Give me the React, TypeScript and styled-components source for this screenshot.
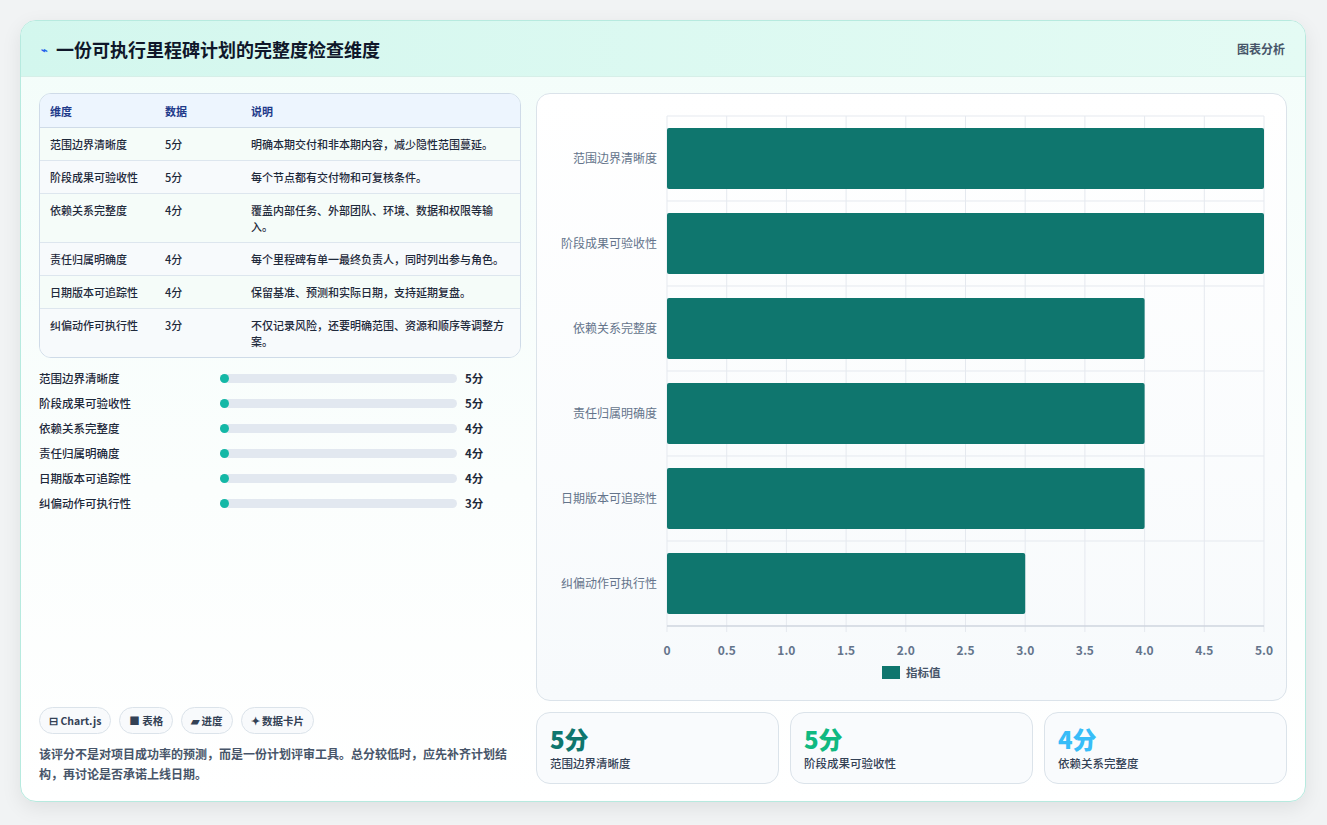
import React from "react";
import styled, { createGlobalStyle } from "styled-components";

const G = createGlobalStyle`
  html,body{margin:0;padding:0;background:#f1f3f4;}
  body{font-family:"Noto Sans CJK SC","Noto Sans",sans-serif;}
`;
const Page = styled.div`padding:20px 21px 23px 20px;`;
const Card = styled.div`
  width:1286px;height:782px;box-sizing:border-box;border:1px solid #b7eadf;border-radius:16px;
  background:linear-gradient(180deg,#f3fdfa 0%,#fbfefd 60%,#ffffff 100%);overflow:hidden;
  box-shadow:0 6px 20px rgba(0,0,0,0.08);display:flex;flex-direction:column;
`;
const Header = styled.div`
  height:55px;display:flex;align-items:center;justify-content:space-between;padding:0 20px 0 20px;
  background:linear-gradient(90deg,#d3f7ee,#e4fbf4);border-bottom:1px solid #d6efe8;
`;
const Title = styled.h1`margin:0;font-size:18px;font-weight:700;color:#0f172a;display:flex;align-items:center;gap:8px;`;
const HLink = styled.span`font-size:12px;color:#475569;font-weight:600;`;
const Body = styled.div`flex:1;display:grid;grid-template-columns:482px 751px;gap:15px;padding:16px 18px 17px 18px;`;
const Left = styled.div`display:flex;flex-direction:column;`;
const Table = styled.table`
  width:100%;border-collapse:separate;border-spacing:0;border:1px solid #cfdbe8;border-radius:12px;overflow:hidden;font-size:11px;color:#1e293b;
  th{background:#edf5fe;color:#1e3a8a;font-weight:600;text-align:left;padding:9px 10px 8px;border-bottom:1px solid #cfdbe8;}
  td{padding:8px 10px;border-bottom:1px solid #dde6ee;vertical-align:top;line-height:16px;font-weight:500;}
  tr:nth-child(odd) td{background:#f5fcf9;}
  tr:nth-child(even) td{background:#f7fafc;}
  tr:last-child td{border-bottom:none;}
`;
const Bars = styled.div`display:flex;flex-direction:column;gap:7px;margin-top:11px;`;
const BarRow = styled.div`display:grid;grid-template-columns:173px 237px 30px;align-items:center;gap:8px;font-size:11.5px;color:#1e293b;font-weight:500;height:18px;`;
const Track = styled.div`height:9px;border-radius:5px;background:#e2e8f0;position:relative;`;
const Dot = styled.div`width:9px;height:9px;border-radius:50%;background:#14b8a6;`;
const Val = styled.span`font-weight:700;font-size:11.5px;`;
const Spacer = styled.div`flex:1;`;
const Chips = styled.div`display:flex;gap:8px;margin-bottom:10px;`;
const Chip = styled.span`font-size:10.5px;font-weight:700;color:#334155;border:1px solid #dbe3ea;border-radius:14px;padding:5px 9px;background:#f8fafc;`;
const Note = styled.p`margin:0;font-size:12px;line-height:20px;color:#475569;font-weight:600;`;
const Right = styled.div`display:flex;flex-direction:column;gap:11px;`;
const ChartBox = styled.div`height:606px;border:1px solid #dbe3ea;border-radius:14px;background:linear-gradient(180deg,#fff,#f7fafc);`;
const Stats = styled.div`display:grid;grid-template-columns:repeat(3,1fr);gap:11px;`;
const Stat = styled.div`height:72px;box-sizing:border-box;border:1px solid #dbe3ea;border-radius:14px;background:#f9fbfd;padding:10px 13px;`;
const Num = styled.div<{c:string}>`font-size:24px;font-weight:800;color:${p=>p.c};line-height:32px;`;
const Lab = styled.div`font-size:11.5px;color:#334155;font-weight:500;`;

const rows = [
  ["范围边界清晰度", 5, "明确本期交付和非本期内容，减少隐性范围蔓延。"],
  ["阶段成果可验收性", 5, "每个节点都有交付物和可复核条件。"],
  ["依赖关系完整度", 4, "覆盖内部任务、外部团队、环境、数据和权限等输入。"],
  ["责任归属明确度", 4, "每个里程碑有单一最终负责人，同时列出参与角色。"],
  ["日期版本可追踪性", 4, "保留基准、预测和实际日期，支持延期复盘。"],
  ["纠偏动作可执行性", 3, "不仅记录风险，还要明确范围、资源和顺序等调整方案。"],
] as const;

function Chart() {
  const x0 = 130, w = 597, top = 22, rh = 85;
  const ticks = [0,0.5,1,1.5,2,2.5,3,3.5,4,4.5,5];
  return (
    <svg width="751" height="606">
      {ticks.map(t => <line key={t} x1={x0+t/5*w} x2={x0+t/5*w} y1={top} y2={top+rh*6+6} stroke="#e5e9ef"/>)}
      {[0,1,2,3,4,5,6].map(i => <line key={i} x1={x0} x2={x0+w} y1={top+i*rh} y2={top+i*rh} stroke="#e5e9ef"/>)}
      <line x1={x0} x2={x0+w} y1={top+rh*6} y2={top+rh*6} stroke="#c4cbd6"/>
      {rows.map((r,i)=>(
        <g key={i}>
          <rect x={x0} y={top+i*rh+12} width={r[1]/5*w} height={61} rx={2} fill="#0f766e"/>
          <text x={x0-10} y={top+i*rh+47} textAnchor="end" fontSize="12" fill="#64748b">{r[0]}</text>
        </g>
      ))}
      {ticks.map(t => <text key={t} x={x0+t/5*w} y={top+rh*6+29} textAnchor="middle" fontSize="12" fill="#64748b" fontWeight="600">{t===0?"0":t.toFixed(1)}</text>)}
      <rect x={345} y={572} width={18} height={13} fill="#0f766e"/>
      <text x={369} y={583} fontSize="11.5" fill="#475569" fontWeight="600">指标值</text>
    </svg>
  );
}

export default function App() {
  return (
    <Page>
      <G />
      <Card>
        <Header>
          <Title><span style={{color:"#2563eb",fontSize:11}}>⌁</span>一份可执行里程碑计划的完整度检查维度</Title>
          <HLink>图表分析</HLink>
        </Header>
        <Body>
          <Left>
            <Table>
              <thead><tr><th style={{width:95}}>维度</th><th style={{width:66}}>数据</th><th>说明</th></tr></thead>
              <tbody>
                {rows.map(r=>(<tr key={r[0]}><td>{r[0]}</td><td>{r[1]}分</td><td>{r[2]}</td></tr>))}
              </tbody>
            </Table>
            <Bars>
              {rows.map(r=>(<BarRow key={r[0]}><span>{r[0]}</span><Track><Dot/></Track><Val>{r[1]}分</Val></BarRow>))}
            </Bars>
            <Spacer/>
            <Chips><Chip>⊟ Chart.js</Chip><Chip>■ 表格</Chip><Chip>▰ 进度</Chip><Chip>✦ 数据卡片</Chip></Chips>
            <Note>该评分不是对项目成功率的预测，而是一份计划评审工具。总分较低时，应先补齐计划结构，再讨论是否承诺上线日期。</Note>
          </Left>
          <Right>
            <ChartBox><Chart/></ChartBox>
            <Stats>
              <Stat><Num c="#0f766e">5分</Num><Lab>范围边界清晰度</Lab></Stat>
              <Stat><Num c="#10b981">5分</Num><Lab>阶段成果可验收性</Lab></Stat>
              <Stat><Num c="#38bdf8">4分</Num><Lab>依赖关系完整度</Lab></Stat>
            </Stats>
          </Right>
        </Body>
      </Card>
    </Page>
  );
}
